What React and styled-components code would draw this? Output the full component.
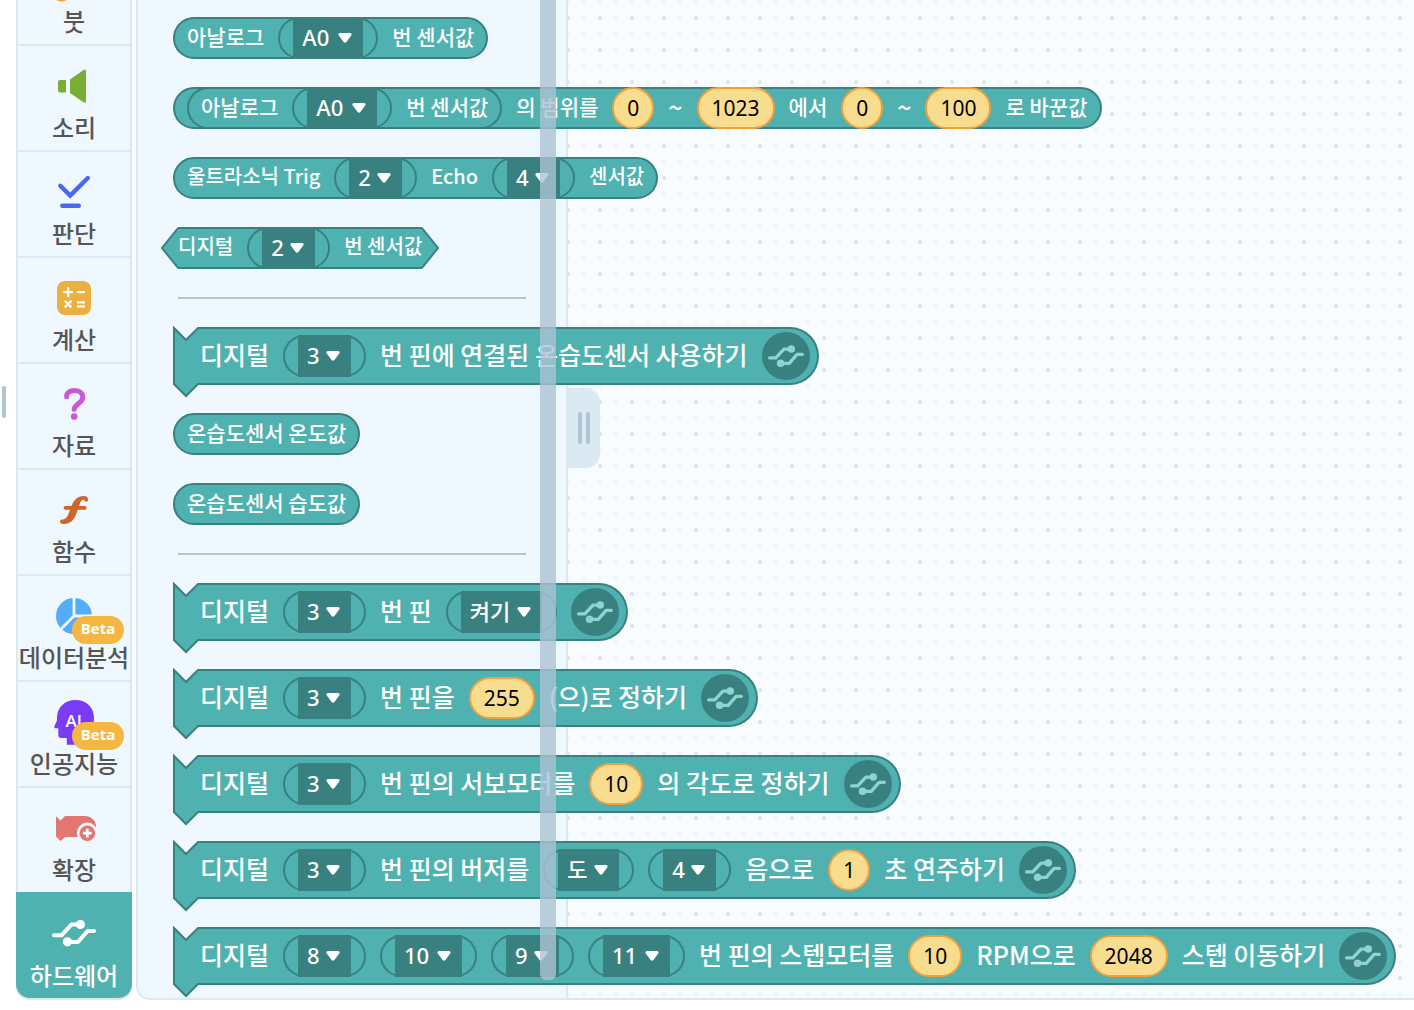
import React from "react";
import styled, { createGlobalStyle, css } from "styled-components";

const teal = "#50b2b0";
const tealDark = "#398080";
const line = "#dae8f2";
const panel = "#eff7ff";
const hangul = `"Noto Sans CJK KR", "Noto Sans", sans-serif`;
const latin = `"Noto Sans", "Noto Sans CJK KR", sans-serif`;

const GlobalStyle = createGlobalStyle`
  *, *::before, *::after { box-sizing: border-box; }
  body { margin: 0; background: #fff; font-family: ${hangul}; overflow: hidden; }
  button, input, select { font: inherit; margin: 0; padding: 0; border: 0; }
`;

const Shell = styled.div`
  display: flex;
  height: 100vh;
  padding-bottom: 10px;
  overflow: hidden;
`;

const Gutter = styled.div`
  flex: none;
  width: 16px;
  padding: 386px 0 0 2px;
`;

const Grip = styled.span`
  display: block;
  width: 4px;
  height: 32px;
  border-radius: 2px;
  background: #adc4d4;
`;

const Sidebar = styled.nav`
  flex: none;
  display: flex;
  flex-direction: column;
  justify-content: flex-end;
  width: 116px;
  margin-right: 4px;
`;

const Category = styled.button`
  position: relative;
  flex: none;
  display: flex;
  flex-direction: column;
  align-items: center;
  height: 106px;
  padding-top: 16px;
  border: 2px solid ${line};
  border-top: 0;
  background: ${panel};
  color: #555;
  cursor: pointer;
  ${(p) =>
    p.$active &&
    css`
      margin: -2px 0 2px;
      padding-top: 18px;
      border: 0;
      border-radius: 0 0 14px 14px;
      background: ${teal};
      color: #fff;
      box-shadow: 0 2px 0 ${line};
    `}
`;

const CategoryIcon = styled.svg`
  flex: none;
  width: 48px;
  height: 48px;
  overflow: visible;
`;

const CategoryName = styled.span`
  font-size: 24px;
  font-weight: 500;
  line-height: 34px;
  white-space: nowrap;
`;

const Beta = styled.span`
  position: absolute;
  top: 40px;
  left: 54px;
  width: 52px;
  height: 28px;
  border-radius: 14px;
  background: #f5b741;
  color: #fff;
  font: 700 15px/25px "Open Sans", sans-serif;
  text-align: center;
`;

const Workspace = styled.main`
  flex: 1;
  display: flex;
  min-width: 0;
  border: solid ${line};
  border-width: 0 0 2px 2px;
  border-radius: 0 0 0 14px;
`;

const Palette = styled.section`
  position: relative;
  z-index: 1;
  flex: none;
  display: flex;
  flex-direction: column;
  align-items: flex-start;
  gap: 28px;
  width: 430px;
  padding: 17px 40px 0 35px;
  border-right: 2px solid ${line};
  border-radius: 0 0 0 12px;
  background: ${panel};
`;

const Scrollbar = styled.div`
  position: absolute;
  top: 0;
  right: 10px;
  bottom: 18px;
  width: 16px;
  border-radius: 0 0 6px 6px;
  background: rgba(173, 194, 211, 0.8);
`;

const Board = styled.section`
  flex: 1;
  min-width: 0;
  padding-top: 388px;
  background-color: #f9fcff;
  background-image: radial-gradient(circle, #dbe8f1 1.8px, transparent 2.4px),
    radial-gradient(circle, #edf6fc 1.8px, transparent 2.4px);
  background-size: 32px 32px, 16px 16px;
  background-position: -16px 2px, -8px 10px;
`;

const FoldButton = styled.button`
  display: flex;
  align-items: center;
  gap: 4px;
  width: 32px;
  height: 80px;
  padding-left: 10px;
  border-radius: 0 14px 14px 0;
  background: #dbe9f2;
  cursor: pointer;
`;

const Divider = styled.hr`
  flex: none;
  align-self: stretch;
  height: 2px;
  margin: 0 0 0 5px;
  border: 0;
  background: #b0c6d6;
`;

const row = css`
  flex: none;
  display: flex;
  align-items: center;
  gap: 14px;
  width: max-content;
  color: #fff;
  font-weight: 500;
  white-space: nowrap;
`;

const Reporter = styled.div`
  ${row}
  height: 42px;
  padding: 0 12px;
  border: 2px solid ${tealDark};
  border-radius: 21px;
  background: ${teal};
  font-size: ${(p) => (p.$compact ? 20 : 21)}px;
`;

const Hexagon = styled.div`
  flex: none;
  display: flex;
  margin-left: -12px;
`;

const HexagonBody = styled.div`
  ${row}
  height: 42px;
  border: solid ${tealDark};
  border-width: 2px 0;
  background: ${teal};
  font-size: 20px;
`;

const Edge = styled.svg`
  flex: none;
  overflow: visible;
  fill: ${teal};
  stroke: ${tealDark};
  stroke-width: 2px;
`;

const Command = styled.div`
  flex: none;
  display: flex;
`;

const CommandBody = styled.div`
  ${row}
  height: 58px;
  padding: 0 7px 0 1px;
  border: 2px solid ${tealDark};
  border-left: 0;
  border-radius: 0 29px 29px 0;
  background: ${teal};
  font-size: 25px;
`;

const Text = styled.span`
  line-height: 32px;
  padding-bottom: 4px;
`;

const Tilde = styled(Text)`
  font-size: 25px;
`;

const Slot = styled.label`
  position: relative;
  flex: none;
  display: flex;
  height: 42px;
  padding: 0 13px;
  border: 2px solid ${tealDark};
  border-radius: 21px;
`;

const Choice = styled.select`
  appearance: none;
  width: ${(p) => p.$width}px;
  height: 42px;
  margin-top: -2px;
  padding: 0 0 3px 9px;
  border-radius: 0;
  background: ${tealDark};
  color: #fff;
  font-family: ${latin};
  font-size: 22px;
`;

const Arrow = styled.svg`
  position: absolute;
  top: 13px;
  right: 24px;
  width: 14px;
  height: 12px;
  pointer-events: none;
`;

const NumberBox = styled.input`
  flex: none;
  width: ${(p) => p.$digits * 12 + 30}px;
  height: 42px;
  padding-bottom: 1px;
  border: 2px solid #f0a03c;
  border-radius: 21px;
  background: #f9dd8f;
  color: #000;
  font-family: ${latin};
  font-size: 21px;
  font-weight: 400;
  text-align: center;
`;

const Badge = styled.span`
  flex: none;
  display: flex;
  align-items: center;
  justify-content: center;
  width: 48px;
  height: 48px;
  border-radius: 50%;
  background: ${tealDark};
  color: #8ed3d0;
`;

function HardwareShape() {
  return (
    <g fill="none" stroke="currentColor" strokeWidth="4" strokeLinecap="round" strokeLinejoin="round">
      <path d="M2 16.3H9.5L19.5 5.5H28" />
      <path d="M15.3 23H26L35.5 12H42" />
      <circle cx="28.4" cy="5.5" r="4.6" fill="currentColor" stroke="none" />
      <circle cx="15.4" cy="22.8" r="4.6" fill="currentColor" stroke="none" />
    </g>
  );
}

const shapes = {
  brush: <ellipse cx="11.5" cy="36" rx="10" ry="9.4" fill="#f79d2f" />,
  sound: (
    <g fill="#77ae33">
      <path d="M10 18H16V30.6H10Q8 30.6 8 28.6V20Q8 18 10 18Z" />
      <path d="M20 17.5L33.5 8Q36 6.8 36 9.3V39Q36 41.5 33.5 40.2L20 31Z" />
    </g>
  ),
  check: (
    <g fill="none" stroke="#4b67ef" strokeWidth="4.4" strokeLinecap="round">
      <path d="M10.3 17.8L20.2 27.6L37.8 10" />
      <path d="M12.3 37.7H28.8" />
    </g>
  ),
  calc: (
    <g stroke="#fff" strokeWidth="2.2">
      <rect x="7" y="7" width="34" height="34" rx="8" fill="#ebb042" stroke="none" />
      <path d="M13.3 18.2H23M18.2 13.3V23M27 18.2H35M14.8 26.8L21.4 33.4M21.4 26.8L14.8 33.4M27 28.3H35M27 32.3H35" />
    </g>
  ),
  question: (
    <g>
      <path
        d="M16.6 16.8C16.6 12.8 19.8 10.6 24.2 10.6C29.2 10.6 32.8 13 32.8 17.2C32.8 20.8 30 22.3 27.6 24.2C25.2 26 24.2 27.2 24.2 29.2"
        fill="none"
        stroke="#cb59d4"
        strokeWidth="5"
        strokeLinecap="round"
      />
      <circle cx="24.2" cy="36.6" r="3.3" fill="#cb59d4" />
    </g>
  ),
  func: (
    <g fill="#d0652b">
      <path d="M10 35.6C10 33.6 11.6 33.4 13.2 33.4C16.6 33.2 17.8 29.6 19.4 25.6L21.8 19.4C24 13.6 28 10 33.6 10C36.6 10 38.2 11.4 38 13.6C37.8 16 36.4 16.2 35.4 15.8C34.4 15.4 35 13.8 33.4 13.8C31 13.8 30 17.4 28.6 21.6L26.6 27C24 34 20.4 38 13.8 38C11.4 38 10 37.4 10 35.6Z" />
      <rect x="13.6" y="20" width="23" height="3.8" rx="1.9" />
    </g>
  ),
  pie: (
    <g>
      <circle cx="24" cy="24" r="18" fill="#54adfb" />
      <path d="M24 5V24H43M24 24L11 37" fill="none" stroke={panel} strokeWidth="2.8" />
    </g>
  ),
  ai: (
    <g>
      <path
        d="M7 20C7 9 15 2 25.5 2C36 2 44 9 44 20C44 28 41 32 38 37V46.7H16.8V40H11.6Q8.3 40 8.3 36.8V30.2H5.2Q3.6 30 4.4 28.3L7 22.6Z"
        fill="#7b3bf7"
      />
      <text x="15.6" y="28.8" fill="#fff" fontFamily="Open Sans, sans-serif" fontSize="17" fontWeight="600">
        AI
      </text>
    </g>
  ),
  extension: (
    <g>
      <path d="M6 12.3L10.5 16.5L15 12H34.5C41 12 46 16.5 46 22.5V33H15L10.5 37L6 32.5Z" fill="#e27672" />
      <circle cx="37.3" cy="29" r="10.4" fill={panel} />
      <circle cx="37.3" cy="29.2" r="7.8" fill="#e27672" />
      <path d="M37.3 24.8V33.6M32.9 29.2H41.7" stroke="#fff" strokeWidth="2.8" />
    </g>
  ),
  hardware: (
    <g transform="translate(2 9)">
      <HardwareShape />
    </g>
  ),
};

const categories = [
  { name: "붓", icon: "brush" },
  { name: "소리", icon: "sound" },
  { name: "판단", icon: "check" },
  { name: "계산", icon: "calc" },
  { name: "자료", icon: "question" },
  { name: "함수", icon: "func" },
  { name: "데이터분석", icon: "pie", beta: true },
  { name: "인공지능", icon: "ai", beta: true },
  { name: "확장", icon: "extension" },
  { name: "하드웨어", icon: "hardware", active: true },
];

function Pick({ value, width = 53 }) {
  return (
    <Slot>
      <Choice $width={width} aria-label={value} defaultValue={value}>
        <option>{value}</option>
      </Choice>
      <Arrow viewBox="0 0 14 12" aria-hidden="true">
        <path d="M2 1H12Q14.6 1.4 13.2 3.6L8.4 10Q7 11.6 5.6 10L.8 3.6Q-.6 1.4 2 1Z" fill="#fff" />
      </Arrow>
    </Slot>
  );
}

function Num({ value }) {
  return <NumberBox $digits={value.length} defaultValue={value} aria-label={value} />;
}

function AnalogValue() {
  return (
    <Reporter>
      <Text>아날로그</Text>
      <Pick value="A0" width={70} />
      <Text>번 센서값</Text>
    </Reporter>
  );
}

function CommandBlock({ children }) {
  return (
    <Command>
      <Edge width="26" height="58" viewBox="0 0 26 58" aria-hidden="true">
        <path d="M26 1H25L13 13L1 1V57L13 69L25 57H26" />
      </Edge>
      <CommandBody>
        {children}
        <Badge>
          <svg width="36" height="24" viewBox="0 0 44 28" aria-hidden="true">
            <HardwareShape />
          </svg>
        </Badge>
      </CommandBody>
    </Command>
  );
}

export default function App() {
  return (
    <>
      <GlobalStyle />
      <Shell>
        <Gutter>
          <Grip />
        </Gutter>
        <Sidebar>
          {categories.map((c) => (
            <Category key={c.name} type="button" $active={c.active}>
              <CategoryIcon viewBox="0 0 48 48" aria-hidden="true">
                {shapes[c.icon]}
              </CategoryIcon>
              <CategoryName>{c.name}</CategoryName>
              {c.beta && <Beta>Beta</Beta>}
            </Category>
          ))}
        </Sidebar>
        <Workspace>
          <Palette>
            <AnalogValue />
            <Reporter>
              <AnalogValue />
              <Text>의 범위를</Text>
              <Num value="0" />
              <Tilde>~</Tilde>
              <Num value="1023" />
              <Text>에서</Text>
              <Num value="0" />
              <Tilde>~</Tilde>
              <Num value="100" />
              <Text>로 바꾼값</Text>
            </Reporter>
            <Reporter $compact>
              <Text>울트라소닉 Trig</Text>
              <Pick value="2" />
              <Text>Echo</Text>
              <Pick value="4" />
              <Text>센서값</Text>
            </Reporter>
            <Hexagon>
              <Edge width="17" height="42" viewBox="0 0 17 42" aria-hidden="true">
                <path d="M17 1L1 21L17 41" />
              </Edge>
              <HexagonBody>
                <Text>디지털</Text>
                <Pick value="2" />
                <Text>번 센서값</Text>
              </HexagonBody>
              <Edge width="17" height="42" viewBox="0 0 17 42" aria-hidden="true">
                <path d="M0 1L16 21L0 41" />
              </Edge>
            </Hexagon>
            <Divider />
            <CommandBlock>
              <Text>디지털</Text>
              <Pick value="3" />
              <Text>번 핀에 연결된 온습도센서 사용하기</Text>
            </CommandBlock>
            <Reporter>
              <Text>온습도센서 온도값</Text>
            </Reporter>
            <Reporter>
              <Text>온습도센서 습도값</Text>
            </Reporter>
            <Divider />
            <CommandBlock>
              <Text>디지털</Text>
              <Pick value="3" />
              <Text>번 핀</Text>
              <Pick value="켜기" width={81} />
            </CommandBlock>
            <CommandBlock>
              <Text>디지털</Text>
              <Pick value="3" />
              <Text>번 핀을</Text>
              <Num value="255" />
              <Text>(으)로 정하기</Text>
            </CommandBlock>
            <CommandBlock>
              <Text>디지털</Text>
              <Pick value="3" />
              <Text>번 핀의 서보모터를</Text>
              <Num value="10" />
              <Text>의 각도로 정하기</Text>
            </CommandBlock>
            <CommandBlock>
              <Text>디지털</Text>
              <Pick value="3" />
              <Text>번 핀의 버저를</Text>
              <Pick value="도" width={61} />
              <Pick value="4" />
              <Text>음으로</Text>
              <Num value="1" />
              <Text>초 연주하기</Text>
            </CommandBlock>
            <CommandBlock>
              <Text>디지털</Text>
              <Pick value="8" />
              <Pick value="10" width={67} />
              <Pick value="9" />
              <Pick value="11" width={67} />
              <Text>번 핀의 스텝모터를</Text>
              <Num value="10" />
              <Text>RPM으로</Text>
              <Num value="2048" />
              <Text>스텝 이동하기</Text>
            </CommandBlock>
            <Scrollbar />
          </Palette>
          <Board>
            <FoldButton type="button" aria-label="블록 꾸러미 접기">
              <Grip />
              <Grip />
            </FoldButton>
          </Board>
        </Workspace>
      </Shell>
    </>
  );
}
